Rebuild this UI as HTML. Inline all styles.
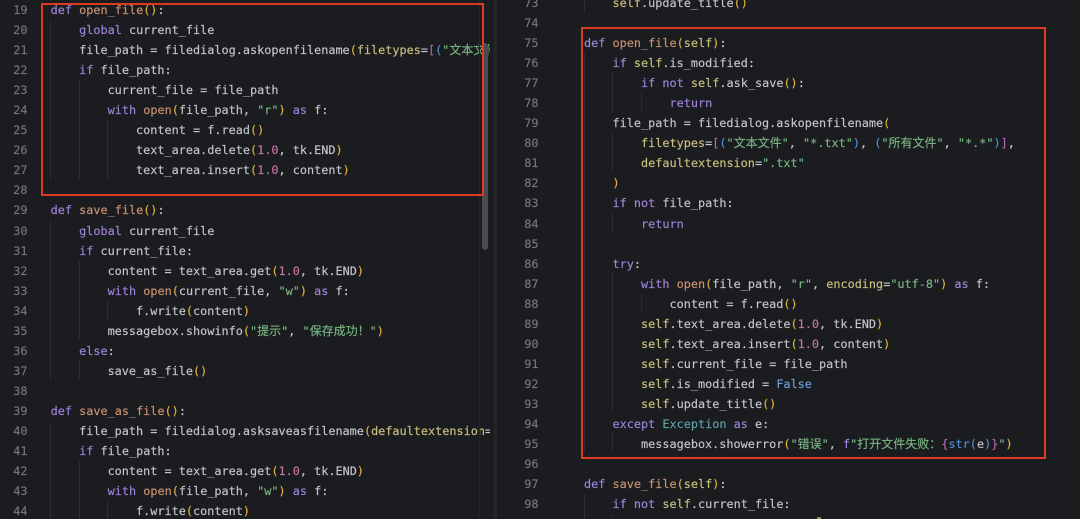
<!DOCTYPE html>
<html lang="zh">
<head>
<meta charset="utf-8">
<title>Code comparison</title>
<style>
html,body{margin:0;padding:0;background:#1b1c1f;}
#root{position:relative;width:1080px;height:519px;overflow:hidden;background:#1b1c1f;}
pre{position:absolute;margin:0;font-family:"DejaVu Sans Mono","Liberation Mono",monospace;font-size:11.83px;line-height:20.04px;color:#c4c6cc;white-space:pre;filter:blur(.3px);-webkit-text-stroke:.15px currentColor;}
pre.num{color:#74777d;text-align:right;}
.clip{position:absolute;overflow:hidden;top:0;height:519px;}
.g{position:absolute;width:1px;background:#2b2c2f;}
.box{position:absolute;box-sizing:border-box;border:2px solid #dd3a22;}
.k{color:#a084dc}.f{color:#cc9272}.p{color:#e0b13c}.s{color:#78b483}.n{color:#c573a5}
.y{color:#c9c17f}.b{color:#4d8fd6}.m{color:#b565b5}.c{color:#5ea3a8}.t{color:#6f9fdc}
.z{font-family:"Noto Sans CJK SC","WenQuanYi Zen Hei",sans-serif;font-size:12px;line-height:0;}
</style>
</head>
<body>
<div id="root">
<pre class="num" style="left:0;top:0;width:27.5px">19
20
21
22
23
24
25
26
27
28
29
30
31
32
33
34
35
36
37
38
39
40
41
42
43
44</pre>

<div class="g" style="left:50px;top:20px;height:160px"></div>
<div class="g" style="left:79px;top:80px;height:100px"></div>
<div class="g" style="left:107px;top:120px;height:60px"></div>
<div class="g" style="left:50px;top:220px;height:160px"></div>
<div class="g" style="left:79px;top:260px;height:80px"></div>
<div class="g" style="left:107px;top:300px;height:20px"></div>
<div class="g" style="left:79px;top:361px;height:19px"></div>
<div class="g" style="left:50px;top:421px;height:98px"></div>
<div class="g" style="left:79px;top:461px;height:58px"></div>
<div class="g" style="left:107px;top:501px;height:18px"></div>

<div class="clip" style="left:0;width:490px">
<pre style="left:50.6px;top:0"><span class="k">def</span> <span class="f">open_file</span><span class="p">()</span>:
    <span class="k">global</span> current_file
    file_path = filedialog.askopenfilename<span class="p">(</span><span class="y">filetypes</span>=<span class="m">[</span><span class="b">(</span><span class="s">"<span class="z">文本文件</span>"</span>
    <span class="k">if</span> file_path:
        current_file = file_path
        <span class="k">with</span> <span class="f">open</span><span class="p">(</span>file_path, <span class="s">"r"</span><span class="p">)</span> <span class="k">as</span> f:
            content = f.read<span class="p">()</span>
            text_area.delete<span class="p">(</span><span class="n">1.0</span>, tk.END<span class="p">)</span>
            text_area.insert<span class="p">(</span><span class="n">1.0</span>, content<span class="p">)</span>

<span class="k">def</span> <span class="f">save_file</span><span class="p">()</span>:
    <span class="k">global</span> current_file
    <span class="k">if</span> current_file:
        content = text_area.get<span class="p">(</span><span class="n">1.0</span>, tk.END<span class="p">)</span>
        <span class="k">with</span> <span class="f">open</span><span class="p">(</span>current_file, <span class="s">"w"</span><span class="p">)</span> <span class="k">as</span> f:
            f.write<span class="p">(</span>content<span class="p">)</span>
        messagebox.showinfo<span class="p">(</span><span class="s">"<span class="z">提示</span>"</span>, <span class="s">"<span class="z">保存成功！</span>"</span><span class="p">)</span>
    <span class="k">else</span>:
        save_as_file<span class="p">()</span>

<span class="k">def</span> <span class="f">save_as_file</span><span class="p">()</span>:
    file_path = filedialog.asksaveasfilename<span class="p">(</span><span class="y">defaultextension</span>=
    <span class="k">if</span> file_path:
        content = text_area.get<span class="p">(</span><span class="n">1.0</span>, tk.END<span class="p">)</span>
        <span class="k">with</span> <span class="f">open</span><span class="p">(</span>file_path, <span class="s">"w"</span><span class="p">)</span> <span class="k">as</span> f:
            f.write<span class="p">(</span>content<span class="p">)</span></pre>
</div>

<div style="position:absolute;left:479px;top:0;width:1px;height:519px;background:#242528"></div>
<div style="position:absolute;left:482px;top:43px;width:6px;height:207px;border-radius:3px;background:#4a4b4e"></div>
<div style="position:absolute;left:494px;top:0;width:3px;height:519px;background:#25262a"></div>
<div class="box" style="left:41px;top:3px;width:442.5px;height:192.5px"></div>

<pre class="num" style="left:500px;top:-7px;width:38.5px">73
74
75
76
77
78
79
80
81
82
83
84
85
86
87
88
89
90
91
92
93
94
95
96
97
98</pre>

<div class="g" style="left:584px;top:0;height:13px"></div>
<div class="g" style="left:584px;top:53px;height:400px"></div>
<div class="g" style="left:612px;top:73px;height:40px"></div>
<div class="g" style="left:641px;top:93px;height:20px"></div>
<div class="g" style="left:612px;top:133px;height:40px"></div>
<div class="g" style="left:612px;top:213px;height:20px"></div>
<div class="g" style="left:612px;top:273px;height:140px"></div>
<div class="g" style="left:641px;top:293px;height:20px"></div>
<div class="g" style="left:612px;top:433px;height:20px"></div>
<div class="g" style="left:584px;top:494px;height:25px"></div>
<div class="g" style="left:612px;top:514px;height:5px"></div>

<pre style="left:584px;top:-7px">    <span class="y">self</span>.update_title<span class="p">()</span>

<span class="k">def</span> <span class="f">open_file</span><span class="p">(</span><span class="y">self</span><span class="p">)</span>:
    <span class="k">if</span> <span class="y">self</span>.is_modified:
        <span class="k">if not</span> <span class="y">self</span>.ask_save<span class="p">()</span>:
            <span class="k">return</span>
    file_path = filedialog.askopenfilename<span class="p">(</span>
        <span class="y">filetypes</span>=<span class="m">[</span><span class="b">(</span><span class="s">"<span class="z">文本文件</span>"</span>, <span class="s">"*.txt"</span><span class="b">)</span>, <span class="b">(</span><span class="s">"<span class="z">所有文件</span>"</span>, <span class="s">"*.*"</span><span class="b">)</span><span class="m">]</span>,
        <span class="y">defaultextension</span>=<span class="s">".txt"</span>
    <span class="p">)</span>
    <span class="k">if not</span> file_path:
        <span class="k">return</span>

    <span class="k">try</span>:
        <span class="k">with</span> <span class="f">open</span><span class="p">(</span>file_path, <span class="s">"r"</span>, <span class="y">encoding</span>=<span class="s">"utf-8"</span><span class="p">)</span> <span class="k">as</span> f:
            content = f.read<span class="p">()</span>
        <span class="y">self</span>.text_area.delete<span class="p">(</span><span class="n">1.0</span>, tk.END<span class="p">)</span>
        <span class="y">self</span>.text_area.insert<span class="p">(</span><span class="n">1.0</span>, content<span class="p">)</span>
        <span class="y">self</span>.current_file = file_path
        <span class="y">self</span>.is_modified = <span class="t">False</span>
        <span class="y">self</span>.update_title<span class="p">()</span>
    <span class="k">except</span> <span class="c">Exception</span> <span class="k">as</span> e:
        messagebox.showerror<span class="p">(</span><span class="s">"<span class="z">错误</span>"</span>, <span class="k">f</span><span class="s">"<span class="z">打开文件失败：</span></span><span class="m">{</span><span class="b">str(</span>e<span class="b">)</span><span class="m">}</span><span class="s">"</span><span class="p">)</span>

<span class="k">def</span> <span class="f">save_file</span><span class="p">(</span><span class="y">self</span><span class="p">)</span>:
    <span class="k">if not</span> <span class="y">self</span>.current_file:</pre>

<div class="box" style="left:581px;top:26.5px;width:464.5px;height:432px"></div>
<div style="position:absolute;left:817px;top:517px;width:4px;height:2px;background:#8f8650"></div>
</div>
</body>
</html>
